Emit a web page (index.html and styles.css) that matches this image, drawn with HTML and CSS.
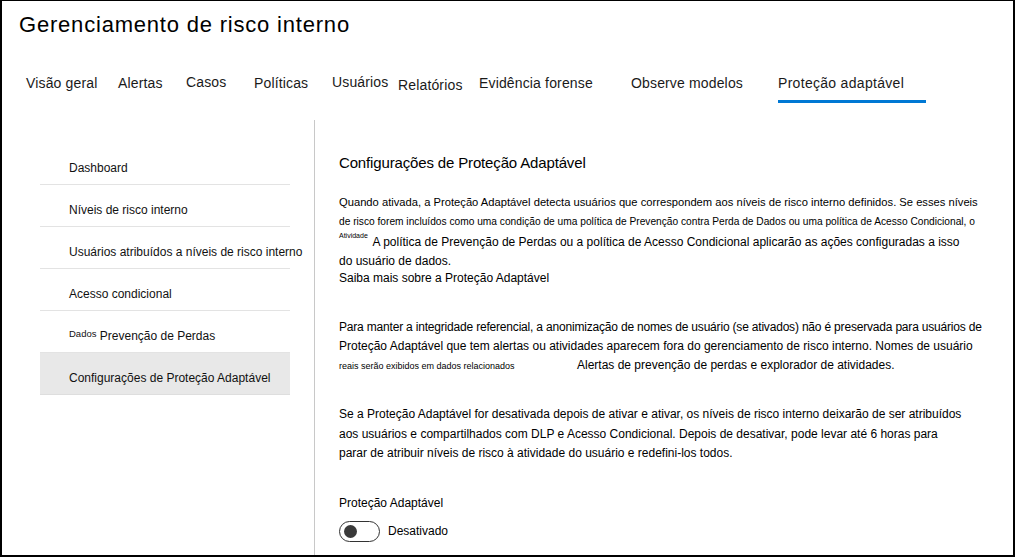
FILE: index.html
```html
<!DOCTYPE html>
<html lang="pt-BR">
    <head>
        <meta charset="utf-8">
        <title>Gerenciamento de risco interno</title>
        <link rel="stylesheet" href="styles.css">
    </head>
    <body>
        <div class="frame">
            <header class="top">
                <h1 class="title">Gerenciamento de risco interno</h1>
                <nav class="tabs">
                    <span class="tab">Visão geral</span>
                    <span class="tab">Alertas</span>
                    <span class="tab high">Casos</span>
                    <span class="tab">Políticas</span>
                    <span class="tab high">Usuários</span>
                    <span class="tab low">Relatórios</span>
                    <span class="tab">Evidência forense</span>
                    <span class="tab">Observe modelos</span>
                    <span class="tab active">Proteção adaptável</span>
                </nav>
            </header>

            <div class="main">
                <aside class="side">
                    <ul class="side-nav">
                        <li>Dashboard</li>
                        <li>Níveis de risco interno</li>
                        <li>Usuários atribuídos a níveis de risco interno</li>
                        <li>Acesso condicional</li>
                        <li><span class="mini">Dados</span> Prevenção de Perdas</li>
                        <li class="selected">Configurações de Proteção Adaptável</li>
                    </ul>
                </aside>

                <section class="content">
                    <h2 class="heading">Configurações de Proteção Adaptável</h2>

                    <div class="para p1">
                        <div class="ln l1">Quando ativada, a Proteção Adaptável detecta usuários que correspondem aos níveis de risco interno definidos. Se esses níveis</div>
                        <div class="ln l2">de risco forem incluídos como uma condição de uma política de Prevenção contra Perda de Dados ou uma política de Acesso Condicional, o</div>
                        <div class="ln l3"><span class="tiny">Atividade</span> A política de Prevenção de Perdas ou a política de Acesso Condicional aplicarão as ações configuradas a isso</div>
                        <div class="ln l4">do usuário de dados.</div>
                        <div class="ln l5">Saiba mais sobre a Proteção Adaptável</div>
                    </div>

                    <div class="para p2">
                        <div class="ln tight">Para manter a integridade referencial, a anonimização de nomes de usuário (se ativados) não é preservada para usuários de</div>
                        <div class="ln">Proteção Adaptável que tem alertas ou atividades aparecem fora do gerenciamento de risco interno. Nomes de usuário</div>
                        <div class="ln"><span class="small-note">reais serão exibidos em dados relacionados</span>Alertas de prevenção de perdas e explorador de atividades.</div>
                    </div>

                    <div class="para p3">
                        <div class="ln">Se a Proteção Adaptável for desativada depois de ativar e ativar, os níveis de risco interno deixarão de ser atribuídos</div>
                        <div class="ln">aos usuários e compartilhados com DLP e Acesso Condicional. Depois de desativar, pode levar até 6 horas para</div>
                        <div class="ln">parar de atribuir níveis de risco à atividade do usuário e redefini-los todos.</div>
                    </div>

                    <div class="field-label">Proteção Adaptável</div>
                    <div class="toggle-row">
                        <span class="toggle"><span class="knob"></span></span>
                        <span class="toggle-text">Desativado</span>
                    </div>
                </section>
            </div>
        </div>
    </body>
</html>
```

FILE: styles.css
```css
body {
    margin: 0;
    padding: 0;
    background: #fff;
    font-family: "Liberation Sans", Arial, sans-serif;
    color: #000;
}

.frame {
    box-sizing: border-box;
    width: 1015px;
    height: 557px;
    border: 2px solid #000;
    border-top-width: 1px;
    overflow: hidden;
    display: flex;
    flex-direction: column;
}

/* header */

.title {
    margin: 0;
    padding: 13px 0 0 17px;
    font-size: 22px;
    line-height: 22px;
    font-weight: normal;
    letter-spacing: 0.8px;
    color: #000;
}

.tabs {
    display: grid;
    grid-template-columns: 92px 68px 68px 78px 66px 81px 152px 147px auto;
    align-items: start;
    margin-top: 37px;
    padding-left: 24px;
    font-size: 14px;
    line-height: 20px;
    letter-spacing: 0.15px;
    color: #1a1a1a;
}

.tab {
    justify-self: start;
    padding-bottom: 7px;
    border-bottom: 3px solid transparent;
    white-space: nowrap;
}

.tab.high {
    margin-top: -1px;
}

.tab.low {
    padding-top: 2px;
}

.tab.active {
    padding-right: 22px;
    letter-spacing: 0.3px;
    border-bottom-color: #0078d4;
}

/* body */

.main {
    display: flex;
    flex: 1;
    margin-top: 15px;
}

.side {
    box-sizing: border-box;
    width: 313px;
    flex-shrink: 0;
    padding: 23px 0 0 38px;
    border-right: 1px solid #c8c8c8;
}

.side-nav {
    list-style: none;
    margin: 0;
    padding: 0;
    width: 250px;
    font-size: 12px;
    line-height: 16px;
    color: #111;
}

.side-nav li {
    height: 16px;
    padding: 17px 0 8px 29px;
    border-bottom: 1px solid #e3e3e3;
    white-space: nowrap;
}

.side-nav li.selected {
    background: #e8e8e8;
    border-bottom-color: #dedede;
}

.side-nav .mini {
    font-size: 9.5px;
    line-height: 10px;
    vertical-align: 3px;
}

.content {
    flex: 1;
    padding: 33px 0 0 24px;
}

.heading {
    margin: 0;
    font-size: 15px;
    line-height: 20px;
    font-weight: normal;
    letter-spacing: -0.15px;
}

.para {
    font-size: 12px;
    line-height: 20px;
    white-space: nowrap;
}

.p1 {
    margin-top: 19px;
}

.p1 .l1 {
    font-size: 11.2px;
}

.p1 .l2 {
    font-size: 10.2px;
}

.p1 .l4,
.p1 .l5 {
    line-height: 18px;
}

.p1 .l5 {
    margin-top: -1px;
}

.tiny {
    margin-right: 2px;
    font-size: 7px;
    line-height: 1;
    vertical-align: top;
}

.p2 {
    margin-top: 31px;
    line-height: 19px;
}

.p2 .tight {
    letter-spacing: -0.19px;
}

.small-note {
    display: inline-block;
    width: 238px;
    font-size: 9px;
}

.p3 {
    margin-top: 29px;
    line-height: 19.5px;
}

.field-label {
    margin-top: 31px;
    font-size: 12px;
    line-height: 16px;
}

.toggle-row {
    display: flex;
    align-items: center;
    gap: 8px;
    margin-top: 10px;
    font-size: 12px;
}

.toggle {
    box-sizing: border-box;
    display: flex;
    align-items: center;
    width: 41px;
    height: 21px;
    padding-left: 4px;
    border: 1.5px solid #333;
    border-radius: 11px;
}

.knob {
    width: 13px;
    height: 13px;
    border-radius: 50%;
    background: #3a3a3a;
}
```
